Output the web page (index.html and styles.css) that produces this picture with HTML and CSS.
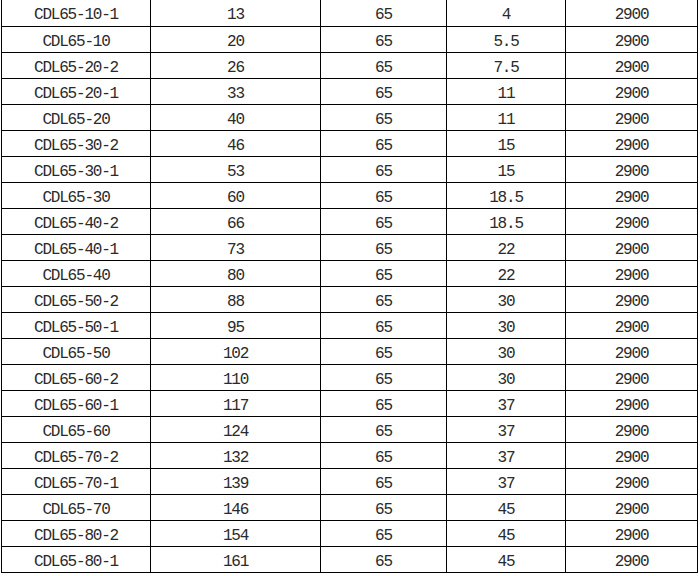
FILE: index.html
```html
<!DOCTYPE html>
<html>
<head>
<meta charset="utf-8">
<link rel="stylesheet" href="styles.css">
</head>
<body>
<table class="spec">
<colgroup>
<col class="c1"><col class="c2"><col class="c3"><col class="c4"><col class="c5">
</colgroup>
<tbody>
<tr><td>CDL65-10-1</td><td>13</td><td>65</td><td>4</td><td>2900</td></tr>
<tr><td>CDL65-10</td><td>20</td><td>65</td><td>5.5</td><td>2900</td></tr>
<tr><td>CDL65-20-2</td><td>26</td><td>65</td><td>7.5</td><td>2900</td></tr>
<tr><td>CDL65-20-1</td><td>33</td><td>65</td><td>11</td><td>2900</td></tr>
<tr><td>CDL65-20</td><td>40</td><td>65</td><td>11</td><td>2900</td></tr>
<tr><td>CDL65-30-2</td><td>46</td><td>65</td><td>15</td><td>2900</td></tr>
<tr><td>CDL65-30-1</td><td>53</td><td>65</td><td>15</td><td>2900</td></tr>
<tr><td>CDL65-30</td><td>60</td><td>65</td><td>18.5</td><td>2900</td></tr>
<tr><td>CDL65-40-2</td><td>66</td><td>65</td><td>18.5</td><td>2900</td></tr>
<tr><td>CDL65-40-1</td><td>73</td><td>65</td><td>22</td><td>2900</td></tr>
<tr><td>CDL65-40</td><td>80</td><td>65</td><td>22</td><td>2900</td></tr>
<tr><td>CDL65-50-2</td><td>88</td><td>65</td><td>30</td><td>2900</td></tr>
<tr><td>CDL65-50-1</td><td>95</td><td>65</td><td>30</td><td>2900</td></tr>
<tr><td>CDL65-50</td><td>102</td><td>65</td><td>30</td><td>2900</td></tr>
<tr><td>CDL65-60-2</td><td>110</td><td>65</td><td>30</td><td>2900</td></tr>
<tr><td>CDL65-60-1</td><td>117</td><td>65</td><td>37</td><td>2900</td></tr>
<tr><td>CDL65-60</td><td>124</td><td>65</td><td>37</td><td>2900</td></tr>
<tr><td>CDL65-70-2</td><td>132</td><td>65</td><td>37</td><td>2900</td></tr>
<tr><td>CDL65-70-1</td><td>139</td><td>65</td><td>37</td><td>2900</td></tr>
<tr><td>CDL65-70</td><td>146</td><td>65</td><td>45</td><td>2900</td></tr>
<tr><td>CDL65-80-2</td><td>154</td><td>65</td><td>45</td><td>2900</td></tr>
<tr><td>CDL65-80-1</td><td>161</td><td>65</td><td>45</td><td>2900</td></tr>
</tbody>
</table>
</body>
</html>
```
FILE: styles.css
```css
html, body {
  margin: 0;
  padding: 0;
  background: #fff;
}
body {
  padding-left: 1px;
}
.spec {
  border-collapse: collapse;
  table-layout: fixed;
  width: 697px;
  font-family: "Liberation Mono", "DejaVu Sans Mono", monospace;
  font-size: 16px;
  letter-spacing: -1.2px;
  color: #2a2a2a;
  border-top: none;
}
.spec .c1 { width: 149px; }
.spec .c2 { width: 170px; }
.spec .c3 { width: 126px; }
.spec .c4 { width: 119px; }
.spec .c5 { width: 132px; }
.spec td {
  border: 1px solid #000;
  height: 26px;
  padding: 5px 0 0 0;
  box-sizing: border-box;
  text-align: center;
  vertical-align: middle;
  line-height: 20px;
  white-space: nowrap;
}
.spec tr:first-child td {
  border-top: none;
}
```
